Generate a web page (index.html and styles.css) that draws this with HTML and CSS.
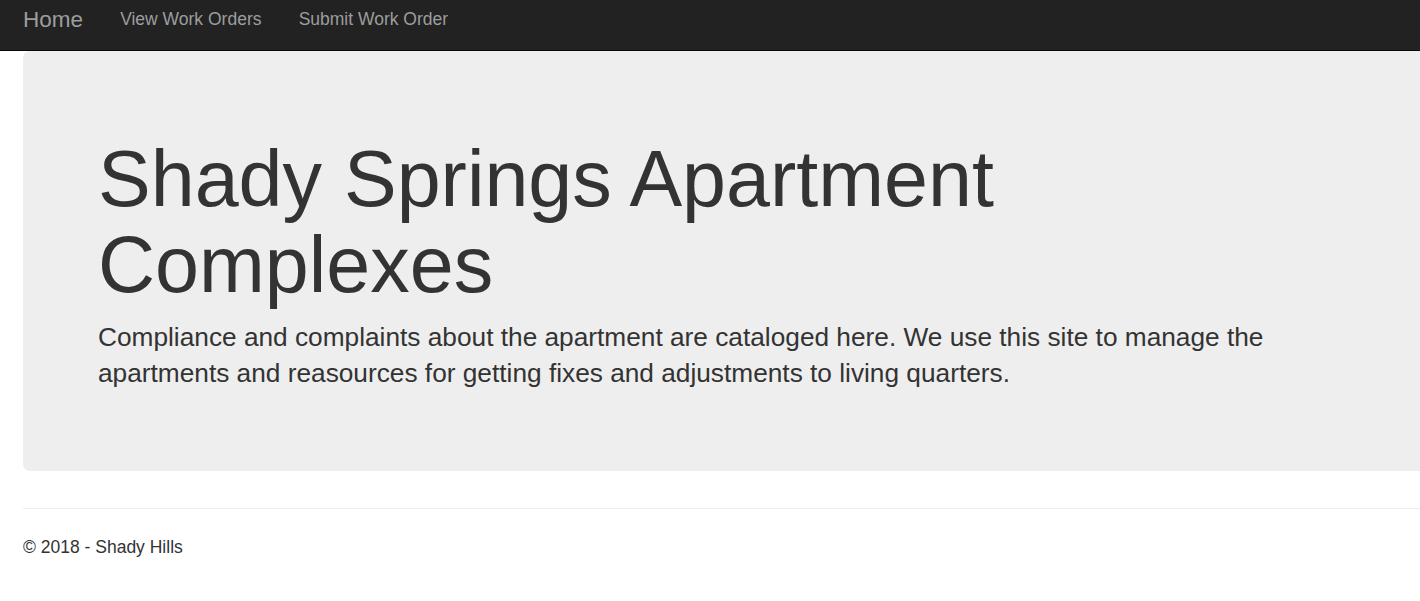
FILE: index.html
```html
<!DOCTYPE html>
<html lang="en">
<head>
<meta charset="utf-8">
<title>Home Page - Shady Hills</title>
<link rel="stylesheet" href="styles.css">
</head>
<body>
<nav class="navbar">
  <a class="brand" href="#">Home</a>
  <ul class="nav">
    <li><a href="#">View Work Orders</a></li>
    <li><a href="#">Submit Work Order</a></li>
  </ul>
</nav>
<div class="body-content">
  <div class="jumbotron">
    <h1>Shady Springs Apartment Complexes</h1>
    <p class="lead">Compliance and complaints about the apartment are cataloged here. We use this site to manage the apartments and reasources for getting fixes and adjustments to living quarters.</p>
  </div>
  <hr class="rule">
  <footer class="footer">
    <p>&copy; 2018 - Shady Hills</p>
  </footer>
</div>
</body>
</html>
```
FILE: styles.css
```css
* { box-sizing: border-box; }
html, body { margin: 0; padding: 0; }
body {
  font-family: "Liberation Sans", Arial, sans-serif;
  font-size: 17.5px;
  line-height: 25px;
  color: #333;
  background: #fff;
  overflow: hidden;
}
.navbar {
  height: 51px;
  background: #222;
  border-bottom: 1px solid #080808;
  display: flex;
  align-items: flex-start;
  padding-left: 4px;
}
.brand {
  font-size: 22.5px;
  line-height: 25px;
  color: #9d9d9d;
  text-decoration: none;
  padding: 7px 18.5px 0 19px;
}
.nav {
  list-style: none;
  margin: 0;
  padding: 0;
  display: flex;
}
.nav a {
  display: block;
  color: #9d9d9d;
  text-decoration: none;
  font-size: 17.5px;
  line-height: 25px;
  padding: 7px 18.6px 0 18.6px;
}
.body-content {
  padding-left: 23px;
  width: 1443px;
}
.jumbotron {
  background: #eee;
  border-radius: 7px;
  padding: 60px 75px 60px 75px;
  height: 420px;
}
.jumbotron h1 {
  font-size: 79px;
  line-height: 86px;
  font-weight: 500;
  margin: 25px 0 11px 0;
  color: #333;
}
.lead {
  font-size: 26.25px;
  line-height: 36px;
  margin: 0;
}
.rule {
  border: 0;
  border-top: 1px solid #eee;
  margin: 37px 0 25px 0;
}
.footer p {
  margin: 0;
  font-size: 17.5px;
  line-height: 26px;
}
```
